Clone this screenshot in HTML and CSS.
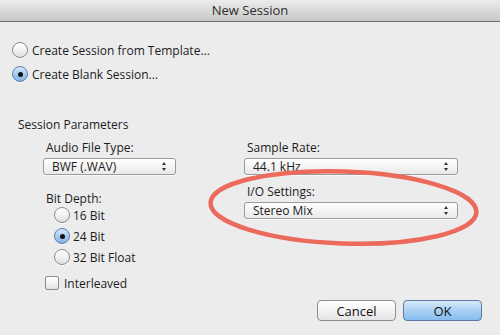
FILE: index.html
```html
<!DOCTYPE html>
<html lang="en">
<head>
    <meta charset="UTF-8">
    <title>New Session</title>
    <link rel="stylesheet" href="styles.css">
</head>
<body>
    <div class="window">
        <div class="titlebar">New Session</div>

        <div class="choices">
            <label class="radio-row"><span class="radio"></span>Create Session from Template...</label>
            <label class="radio-row"><span class="radio checked"></span>Create Blank Session...</label>
        </div>

        <div class="group-title">Session Parameters</div>

        <div class="params">
            <div class="col">
                <div class="field-label">Audio File Type:</div>
                <div class="popup">BWF (.WAV)<span class="arrows"></span></div>
                <div class="field-label spaced">Bit Depth:</div>
                <div class="bit-list">
                    <label class="radio-row small"><span class="radio"></span>16 Bit</label>
                    <label class="radio-row small"><span class="radio checked"></span>24 Bit</label>
                    <label class="radio-row small"><span class="radio"></span>32 Bit Float</label>
                </div>
                <label class="check-row"><span class="checkbox"></span>Interleaved</label>
            </div>
            <div class="col">
                <div class="field-label">Sample Rate:</div>
                <div class="popup">44.1 kHz<span class="arrows"></span></div>
                <div class="field-label spaced-sm">I/O Settings:</div>
                <div class="popup">Stereo Mix<span class="arrows"></span></div>
            </div>
        </div>

        <div class="buttons">
            <button class="btn">Cancel</button>
            <button class="btn default">OK</button>
        </div>

        <!-- hand-drawn highlight round the I/O setting -->
        <svg class="highlight" width="500" height="335" viewBox="0 0 500 335">
            <ellipse cx="343.5" cy="207.5" rx="133" ry="36" transform="rotate(2 343.5 207.5)"
                     fill="none" stroke="#ec6a5c" stroke-width="4.5"/>
        </svg>
    </div>
</body>
</html>
```

FILE: styles.css
```css
body {
    margin: 0;
    padding: 0;
    font-family: "Open Sans", "DejaVu Sans", sans-serif;
    font-size: 12px;
    color: #1c1c1c;
}

.window {
    position: relative;
    width: 500px;
    height: 335px;
    background-color: #ececec;
    display: flex;
    flex-direction: column;
    overflow: hidden;
}

.titlebar {
    height: 21px;
    line-height: 21px;
    text-align: center;
    font-size: 13px;
    color: #2e2e2e;
    background: linear-gradient(#ececec, #d6d6d6 60%, #c6c6c6);
    border-bottom: 1px solid #6e6e6e;
}

.choices {
    display: flex;
    flex-direction: column;
    gap: 8px;
    margin-top: 20px;
    padding-left: 12px;
}

.radio-row {
    display: flex;
    align-items: center;
    height: 16px;
    gap: 4px;
}

.radio {
    width: 14px;
    height: 14px;
    border: 1px solid #8c8c8c;
    border-radius: 50%;
    background: linear-gradient(#ffffff, #f2f2f2 50%, #dedede);
    box-shadow: 0 1px 0 rgba(255, 255, 255, 0.6);
    display: flex;
    align-items: center;
    justify-content: center;
    flex-shrink: 0;
}

.radio.checked {
    border-color: #5e7fa8;
    background: linear-gradient(#d4e8fa, #a9cdf1 50%, #7fb4e6);
}

.radio.checked::after {
    content: "";
    width: 5px;
    height: 5px;
    border-radius: 50%;
    background-color: #111;
}

.group-title {
    margin-top: 35px;
    padding-left: 18px;
    line-height: 16px;
}

.params {
    display: grid;
    grid-template-columns: 133px 214px;
    column-gap: 68px;
    margin-top: 7px;
    padding-left: 43px;
}

.col {
    display: flex;
    flex-direction: column;
}

.field-label {
    line-height: 16px;
    padding-left: 3px;
    margin-bottom: 2px;
}

.field-label.spaced {
    margin-top: 16px;
    margin-bottom: 0;
}

.field-label.spaced-sm {
    margin-top: 9px;
}

.popup {
    position: relative;
    height: 15px;
    line-height: 15px;
    padding-left: 8px;
    border: 1px solid #9b9b9b;
    border-radius: 3px;
    background: linear-gradient(#ffffff, #f4f4f4 50%, #e9e9e9);
    box-shadow: 0 1px 0 rgba(255, 255, 255, 0.7);
}

.arrows {
    position: absolute;
    right: 8px;
    top: 3px;
    width: 5px;
    height: 9px;
}

.arrows::before,
.arrows::after {
    content: "";
    position: absolute;
    left: 0;
    border-left: 2.5px solid transparent;
    border-right: 2.5px solid transparent;
}

.arrows::before {
    top: 0;
    border-bottom: 3px solid #333;
}

.arrows::after {
    bottom: 0;
    border-top: 3px solid #333;
}

.bit-list {
    display: flex;
    flex-direction: column;
    gap: 5px;
    padding-left: 11px;
}

.radio-row.small {
    gap: 3px;
}

.check-row {
    display: flex;
    align-items: center;
    gap: 5px;
    height: 16px;
    margin-top: 10px;
    padding-left: 2px;
}

.checkbox {
    width: 12px;
    height: 12px;
    border: 1px solid #8c8c8c;
    border-radius: 2px;
    background: linear-gradient(#ffffff, #f2f2f2 50%, #e2e2e2);
}

.buttons {
    margin-top: auto;
    margin-bottom: 14px;
    padding-right: 18px;
    display: flex;
    justify-content: flex-end;
    gap: 7px;
}

.btn {
    width: 79px;
    height: 21px;
    padding: 0;
    font-family: inherit;
    font-size: 13px;
    color: #111;
    border: 1px solid #8f8f8f;
    border-radius: 4px;
    background: linear-gradient(#ffffff, #f3f3f3 50%, #e4e4e4);
}

.btn.default {
    border-color: #5b7ba6;
    background: linear-gradient(#d7eafb, #a9d0f3 50%, #86bdee);
}

.highlight {
    position: absolute;
    left: 0;
    top: 0;
    pointer-events: none;
}
```
